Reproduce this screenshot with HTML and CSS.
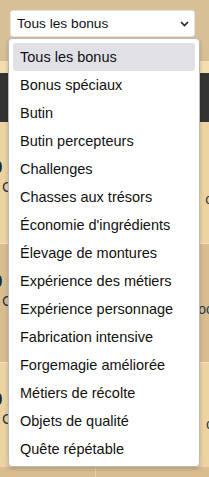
FILE: index.html
```html
<!DOCTYPE html>
<html lang="fr">
<head>
<meta charset="utf-8">
<title>Bonus</title>
<link rel="stylesheet" href="styles.css">
</head>
<body>
<div class="page">
  <header class="top">
    <div class="select">
      <span class="select-label">Tous les bonus</span>
      <svg class="chevron" width="9" height="6" viewBox="0 0 9 6"><path d="M1 1 L4.5 4.5 L8 1" fill="none" stroke="#222" stroke-width="1.6"/></svg>
    </div>
  </header>
  <div class="cream"></div>
  <div class="dark"></div>
  <section class="card card-light c1">
    <div class="card-left">
      <span class="num">0</span>
      <span class="lbl">C</span>
    </div>
    <span class="right-txt r1">o</span>
  </section>
  <section class="card card-dark c2">
    <div class="card-left">
      <span class="num">0</span>
      <span class="lbl">C</span>
    </div>
    <span class="right-txt r2">oc</span>
  </section>
  <section class="card card-light c3">
    <div class="card-left">
      <span class="num">0</span>
      <span class="lbl">C</span>
    </div>
    <span class="right-txt r3">c</span>
  </section>
  <footer class="bottom">
    <div class="bottom-cell"></div>
    <div class="bottom-cell"></div>
  </footer>
</div>

<ul class="menu">
  <li class="item active">Tous les bonus</li>
  <li class="item">Bonus spéciaux</li>
  <li class="item">Butin</li>
  <li class="item">Butin percepteurs</li>
  <li class="item">Challenges</li>
  <li class="item">Chasses aux trésors</li>
  <li class="item">Économie d'ingrédients</li>
  <li class="item">Élevage de montures</li>
  <li class="item">Expérience des métiers</li>
  <li class="item">Expérience personnage</li>
  <li class="item">Fabrication intensive</li>
  <li class="item">Forgemagie améliorée</li>
  <li class="item">Métiers de récolte</li>
  <li class="item">Objets de qualité</li>
  <li class="item">Quête répétable</li>
</ul>
</body>
</html>
```
FILE: styles.css
```css
html, body {
  margin: 0;
  padding: 0;
}
body {
  width: 209px;
  height: 477px;
  overflow: hidden;
  position: relative;
  font-family: "Liberation Sans", Arial, sans-serif;
  background: #d8be90;
}
.page {
  display: flex;
  flex-direction: column;
}
.top {
  height: 61px;
  background: #d8c096;
  padding: 10px 14px 0 10px;
  box-sizing: border-box;
}
.select {
  height: 27px;
  box-sizing: border-box;
  background: #fff;
  border: 1px solid #e3e3e3;
  border-radius: 3px;
  display: flex;
  align-items: center;
  justify-content: space-between;
  padding: 0 5px 0 6px;
}
.select-label {
  font-size: 13.7px;
  color: #111;
  line-height: 1;
  margin-top: 1px;
}
.chevron {
  display: block;
  margin-top: 1px;
}
.cream {
  height: 12px;
  background: #f5deae;
}
.dark {
  height: 49px;
  background: #333333;
}
.card {
  display: flex;
  justify-content: space-between;
  overflow: hidden;
  box-sizing: border-box;
  color: #1f2c3c;
}
.card-light {
  background: #edd3a2;
}
.card-dark {
  background: #d8bd8f;
}
.c1 {
  height: 122px;
  padding-top: 36px;
  border-bottom: 1px solid #f4e0b6;
}
.c2 {
  height: 118px;
  padding-top: 28px;
}
.c3 {
  height: 105px;
  padding-top: 27px;
  border-top: 1px solid #f4e0b6;
}
.card-left {
  display: flex;
  flex-direction: column;
  margin-left: -7px;
}
.num {
  font-size: 17px;
  font-weight: bold;
  line-height: 20px;
}
.lbl {
  font-size: 15px;
  line-height: 18px;
  margin-left: 9px;
  color: #2c3a4c;
}
.right-txt {
  font-size: 14px;
  line-height: 18px;
  color: #2c3a4c;
  margin-right: -4px;
}
.r1 { margin-top: 32px; }
.r2 { margin-top: 28px; }
.r3 { margin-top: 25px; }
.bottom {
  height: 10px;
  display: grid;
  grid-template-columns: 95px 1fr;
  background: #d8bd8f;
}
.bottom-cell + .bottom-cell {
  border-left: 1px solid #ead2a6;
}
.menu {
  position: absolute;
  left: 8px;
  top: 38px;
  width: 192px;
  box-sizing: border-box;
  margin: 0;
  padding: 4px 4px 3px;
  list-style: none;
  background: #fff;
  border: 1px solid #b9b9b9;
  border-radius: 4px;
  box-shadow: 0 2px 4px rgba(0, 0, 0, 0.18);
}
.item {
  height: 28px;
  line-height: 28px;
  padding-left: 7px;
  font-size: 14.5px;
  color: #111;
  white-space: nowrap;
  border-radius: 3px;
}
.item.active {
  background: #e1e0e6;
}
```
